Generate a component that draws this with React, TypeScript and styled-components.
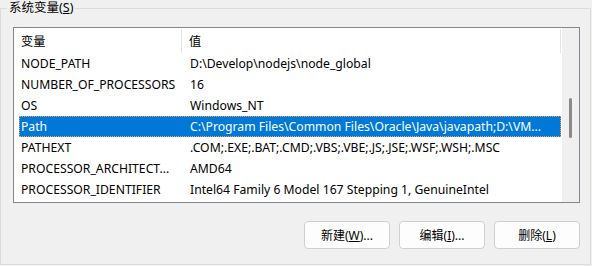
import React from 'react';
import styled, { createGlobalStyle } from 'styled-components';

const Global = createGlobalStyle`
  html, body {
    margin: 0;
    padding: 0;
    background: #f0f0f0;
  }
  body {
    font-family: "Noto Sans", "Noto Sans CJK SC", sans-serif;
    font-size: 12.2px;
    color: #000;
  }
`;

const Group = styled.fieldset`
  box-sizing: border-box;
  width: 590px;
  height: 265px;
  margin: 0;
  padding: 0 10px 0 12px;
  border: 1px solid #dcdcdc;
  border-radius: 0;
  display: flex;
  flex-direction: column;
`;

const Legend = styled.legend`
  padding: 0 2px;
  margin-left: -6px;
  font-size: 12.5px;
  line-height: 16px;
`;

const Key = styled.u`
  text-underline-offset: 1px;
`;

const ListBox = styled.div`
  box-sizing: border-box;
  margin-top: 11px;
  width: 567px;
  height: 176px;
  border: 1px solid #828790;
  background: #fff;
  display: flex;
`;

const Table = styled.div`
  flex: 1;
  display: flex;
  flex-direction: column;
  overflow: hidden;
`;

const Header = styled.div`
  display: flex;
  height: 25px;
  align-items: center;
`;

const HeadCell = styled.div<{ $w?: number }>`
  box-sizing: border-box;
  ${(p) => (p.$w ? `width: ${p.$w}px;` : 'flex: 1;')}
  height: 24px;
  display: flex;
  align-items: center;
  padding-left: 7px;
  border-right: 1px solid #e5e5e5;
`;

const Rows = styled.div`
  display: flex;
  flex-direction: column;
  padding-left: 5px;
`;

const Row = styled.div<{ $sel?: boolean }>`
  box-sizing: border-box;
  display: flex;
  align-items: center;
  height: 21px;
  background: ${(p) => (p.$sel ? '#0078d7' : 'transparent')};
  color: ${(p) => (p.$sel ? '#fff' : '#000')};
  border: 1px dotted ${(p) => (p.$sel ? '#f7a14a' : 'transparent')};
  white-space: nowrap;
`;

const Cell = styled.div<{ $w?: number }>`
  box-sizing: border-box;
  ${(p) => (p.$w ? `width: ${p.$w}px;` : 'flex: 1;')}
  padding-left: 1px;
  overflow: hidden;
`;

const ScrollBar = styled.div`
  width: 17px;
  margin-left: 1px;
  background: #f0f0f0;
  display: flex;
  justify-content: center;
  padding-top: 70px;
  box-sizing: border-box;
`;

const Thumb = styled.div`
  width: 3px;
  height: 40px;
  border-radius: 2px;
  background: #8a8a8a;
`;

const Buttons = styled.div`
  display: flex;
  justify-content: flex-end;
  gap: 9px;
  margin-top: 18px;
  width: 567px;
`;

const Button = styled.button`
  box-sizing: border-box;
  width: 86px;
  height: 28px;
  border: 1px solid #d0d0d0;
  border-radius: 4px;
  background: #fdfdfd;
  font-family: inherit;
  font-size: 12px;
  color: #000;
  padding: 0;
`;

const vars: [string, string][] = [
  ['NODE_PATH', 'D:\\Develop\\nodejs\\node_global'],
  ['NUMBER_OF_PROCESSORS', '16'],
  ['OS', 'Windows_NT'],
  ['Path', 'C:\\Program Files\\Common Files\\Oracle\\Java\\javapath;D:\\VM...'],
  ['PATHEXT', '.COM;.EXE;.BAT;.CMD;.VBS;.VBE;.JS;.JSE;.WSF;.WSH;.MSC'],
  ['PROCESSOR_ARCHITECT...', 'AMD64'],
  ['PROCESSOR_IDENTIFIER', 'Intel64 Family 6 Model 167 Stepping 1, GenuineIntel'],
];

export default function App() {
  return (
    <>
      <Global />
      <Group>
        <Legend>
          系统变量(<Key>S</Key>)
        </Legend>
        <ListBox>
          <Table>
            <Header>
              <HeadCell $w={168}>变量</HeadCell>
              <HeadCell>值</HeadCell>
            </Header>
            <Rows>
              {vars.map(([k, v]) => (
                <Row key={k} $sel={k === 'Path'}>
                  <Cell $w={169}>{k}</Cell>
                  <Cell>{v}</Cell>
                </Row>
              ))}
            </Rows>
          </Table>
          <ScrollBar>
            <Thumb />
          </ScrollBar>
        </ListBox>
        <Buttons>
          <Button>
            新建(<Key>W</Key>)...
          </Button>
          <Button>
            编辑(<Key>I</Key>)...
          </Button>
          <Button>
            删除(<Key>L</Key>)
          </Button>
        </Buttons>
      </Group>
    </>
  );
}
